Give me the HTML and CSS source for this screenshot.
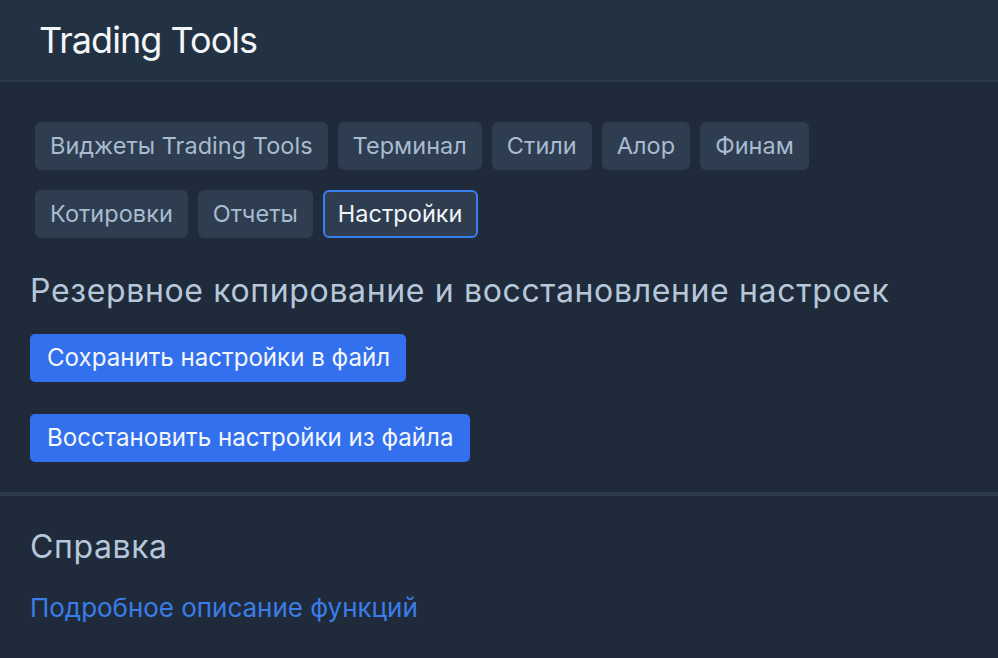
FILE: index.html
```html
<!DOCTYPE html>
<html lang="ru">
<head>
<meta charset="utf-8">
<title>Trading Tools</title>
<link rel="stylesheet" href="styles.css">
</head>
<body>
<header class="app-header">
  <h1 class="app-title">Trading Tools</h1>
</header>
<main class="content">
  <nav class="tabs">
    <button class="tab">Виджеты Trading Tools</button>
    <button class="tab">Терминал</button>
    <button class="tab">Стили</button>
    <button class="tab">Алор</button>
    <button class="tab">Финам</button>
    <button class="tab">Котировки</button>
    <button class="tab">Отчеты</button>
    <button class="tab tab-active">Настройки</button>
  </nav>
  <h2 class="section-title">Резервное копирование и восстановление настроек</h2>
  <div class="actions">
    <button class="btn-primary">Сохранить настройки в файл</button>
    <button class="btn-primary">Восстановить настройки из файла</button>
  </div>
</main>
<section class="help">
  <h2 class="help-title">Справка</h2>
  <a class="help-link" href="#">Подробное описание функций</a>
</section>
</body>
</html>
```
FILE: styles.css
```css
* { box-sizing: border-box; }
html, body { margin: 0; padding: 0; }
body {
  background: #1f2b3a;
  font-family: Inter, "Noto Sans", sans-serif;
  width: 998px;
  height: 658px;
  overflow: hidden;
}
.app-header {
  height: 82px;
  background: #223243;
  border-bottom: 2px solid #2c3b4b;
  padding: 20px 0 0 39px;
}
.app-title {
  margin: 0;
  font-size: 36px;
  font-weight: 400;
  color: #f3f6f9;
  letter-spacing: -0.95px;
  line-height: 40px;
}
.content {
  padding: 40px 30px 30px;
  border-bottom: 4px solid #2d3b4b;
}
.tabs {
  display: flex;
  flex-wrap: wrap;
  gap: 20px 10px;
  margin-left: 5px;
  width: 800px;
}
.tab {
  font-family: inherit;
  font-size: 23.5px;
  line-height: 32px;
  padding: 6px 13px;
  border: 2px solid #2e3d4f;
  background: #2e3d4f;
  color: #a8bbd1;
  border-radius: 6px;
  letter-spacing: 0.03px;
}
.tab-active {
  border-color: #3b7ef0;
  color: #f1f5f9;
}
.section-title {
  margin: 33px 0 0;
  font-size: 32px;
  line-height: 40px;
  font-weight: 400;
  color: #b6c7da;
  letter-spacing: 0.64px;
}
.actions {
  display: flex;
  flex-direction: column;
  align-items: flex-start;
  gap: 32px;
  margin-top: 23px;
}
.btn-primary {
  font-family: inherit;
  font-size: 24.1px;
  line-height: 32px;
  padding: 8px 16px 8px 17px;
  border: none;
  border-radius: 5px;
  background: #3370ee;
  color: #f4f7fb;
  letter-spacing: 0;
}
.help {
  padding: 31px 30px 0;
}
.help-title {
  margin: 0;
  font-size: 32px;
  line-height: 40px;
  font-weight: 400;
  color: #b6c7da;
  letter-spacing: 0.6px;
}
.help-link {
  display: block;
  margin-top: 25px;
  font-size: 26px;
  line-height: 32px;
  color: #3b7ce9;
  text-decoration: none;
  letter-spacing: -0.03px;
}
```
